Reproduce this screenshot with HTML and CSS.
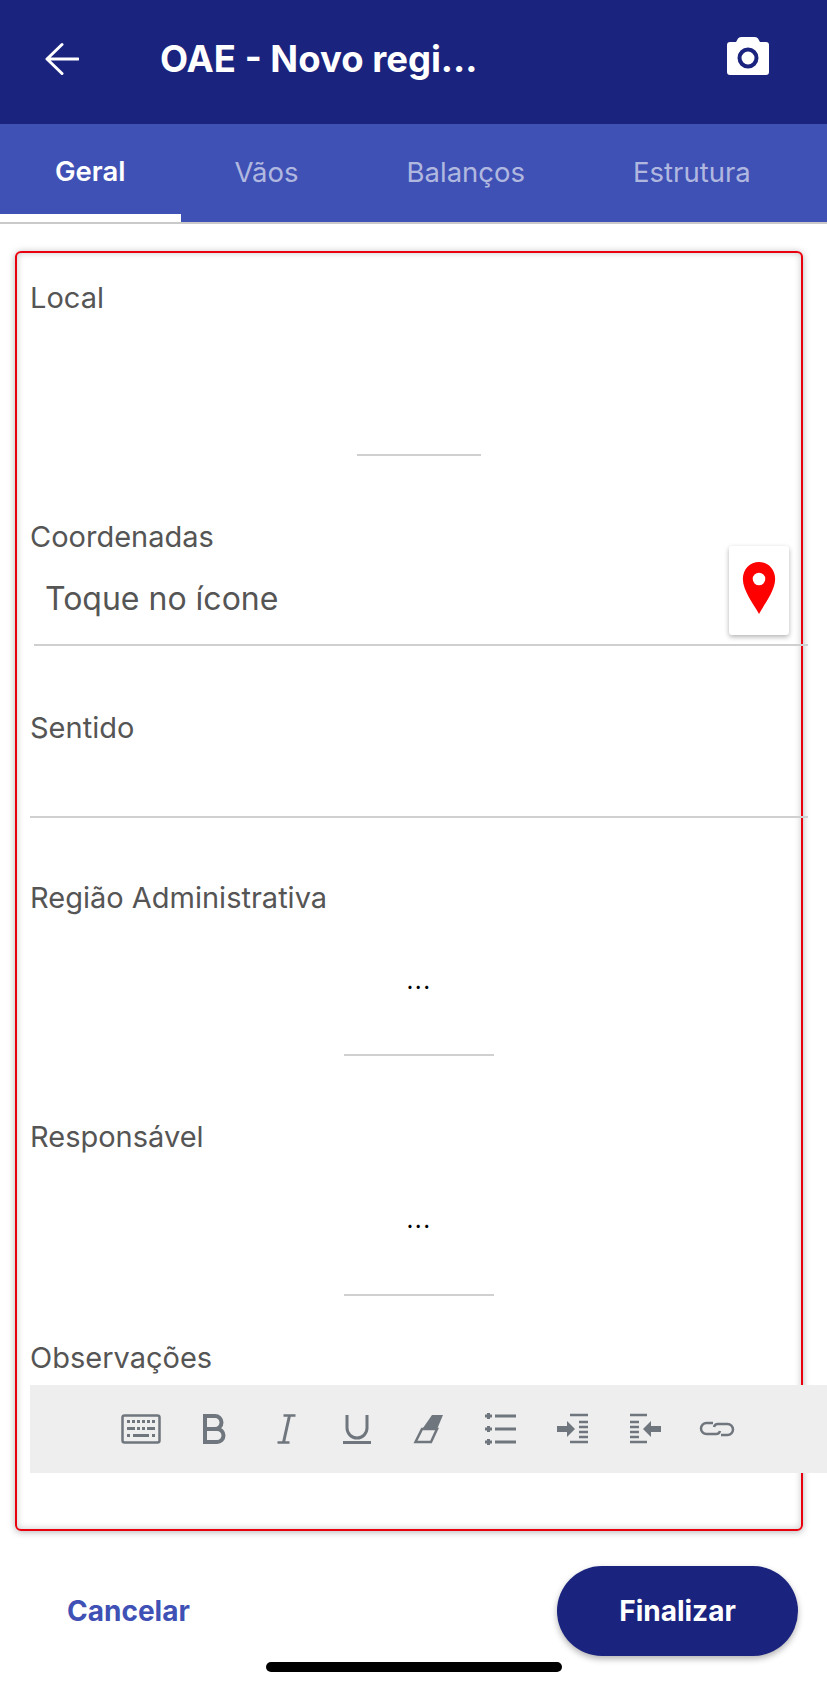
FILE: index.html
```html
<!DOCTYPE html>
<html lang="pt-BR">
<head>
    <meta charset="UTF-8">
    <meta name="viewport" content="width=device-width, initial-scale=1.0">
    <title>OAE - Novo registro</title>
    <link rel="stylesheet" href="styles.css">
</head>
<body>
    <header class="app-bar">
        <svg class="back-icon" viewBox="0 0 34 34">
            <path d="M33 17H2M17 2.500 2 17l15 14.500"/>
        </svg>
        <h1 class="title">OAE - Novo regi...</h1>
        <svg class="camera-icon" viewBox="0 0 42 38">
            <path fill-rule="evenodd" d="M9 5 11 1.500Q12 0 14 0H28Q30 0 31 1.500L33 5H39Q42 5 42 8V35Q42 38 39 38H3Q0 38 0 35V8Q0 5 3 5ZM21 10.500A10.500 10.500 0 1 0 21 31.500 10.500 10.500 0 0 0 21 10.500ZM21 14.500A6.500 6.500 0 1 1 21 27.500 6.500 6.500 0 0 1 21 14.500Z"/>
        </svg>
    </header>

    <nav class="tabs">
        <div class="tab active">Geral</div>
        <div class="tab">Vãos</div>
        <div class="tab">Balanços</div>
        <div class="tab">Estrutura</div>
    </nav>

    <main class="panel">
        <div class="field first">
            <div class="label">Local</div>
            <div class="picker short"></div>
        </div>

        <div class="field coordinates">
            <div class="label">Coordenadas</div>
            <div class="coords">Toque no ícone</div>
            <div class="pin-button">
                <svg class="pin-icon" viewBox="0 0 36 58">
                    <path fill-rule="evenodd" d="M18 0C8 0 0 8 0 19 0 32 12 47 18 58 24 47 36 32 36 19 36 8 28 0 18 0ZM18 12A7 7 0 1 1 18 26 7 7 0 0 1 18 12Z"/>
                </svg>
            </div>
        </div>

        <div class="field">
            <div class="label">Sentido</div>
            <div class="text-input"></div>
        </div>

        <div class="field region">
            <div class="label">Região Administrativa</div>
            <div class="picker">...</div>
        </div>

        <div class="field owner">
            <div class="label">Responsável</div>
            <div class="picker tall">...</div>
        </div>

        <div class="field last">
            <div class="label">Observações</div>
            <div class="toolbar">
                <div class="tool">
                    <svg width="40" height="30" viewBox="0 0 40 30">
                        <rect x="1.500" y="1.500" width="37" height="27" rx="2" class="line"/>
                        <path class="fill" d="M6 6h3v3H6zM11 6h3v3h-3zM16 6h3v3h-3zM21 6h3v3h-3zM26 6h3v3h-3zM31 6h3v3h-3zM6 13h8v3H6zM16 13h3v3h-3zM21 13h3v3h-3zM26 13h8v3h-8zM6 20h3v3H6zM12 20h16v3H12zM31 20h3v3h-3z"/>
                    </svg>
                </div>
                <div class="tool">
                    <svg width="24" height="30" viewBox="0 0 24 30">
                        <path class="line thick" d="M4 2h10a6.500 6.500 0 0 1 0 13H4zM4 15h12a6.500 6.500 0 0 1 0 13H4z"/>
                    </svg>
                </div>
                <div class="tool">
                    <svg width="18" height="30" viewBox="0 0 18 30">
                        <path class="line" d="M7.500 1.500h12M1.500 28.500h12"/>
                        <path class="line medium" d="M13.500 1.500 7.500 28.500"/>
                    </svg>
                </div>
                <div class="tool">
                    <svg width="28" height="30" viewBox="0 0 28 30">
                        <path class="line medium" d="M4 1v13a10 10 0 0 0 20 0V1M0 28.500h28"/>
                    </svg>
                </div>
                <div class="tool">
                    <svg width="30" height="30" viewBox="0 0 30 30">
                        <path class="fill" d="M18 1h11l-5.500 13H9z"/>
                        <path class="line" d="M8 15h15l-6 13H1.500z"/>
                    </svg>
                </div>
                <div class="tool">
                    <svg width="32" height="30" viewBox="0 0 32 30">
                        <path class="line medium" d="M10 2h21M10 15h21M10 28h21M0 2h7M3.500 -1v6M0 15h7M3.500 12v6M0 28h7M3.500 25v6"/>
                    </svg>
                </div>
                <div class="tool">
                    <svg width="32" height="30" viewBox="0 0 32 30">
                        <path class="line" d="M13 1h18M22 8h9M22 13h9M22 18h9M22 23h9M13 28h18"/>
                        <path class="fill" d="M0 12h10V7l8 8-8 8v-5H0z"/>
                    </svg>
                </div>
                <div class="tool">
                    <svg width="32" height="30" viewBox="0 0 32 30">
                        <path class="line" d="M1 1h17M1 8h9M1 13h9M1 18h9M1 23h9M1 28h17"/>
                        <path class="fill" d="M32 12H22V7l-8 8 8 8v-5h10z"/>
                    </svg>
                </div>
                <div class="tool">
                    <svg width="36" height="16" viewBox="0 0 36 16">
                        <path class="line" d="M14 2H7.500a5.500 5.500 0 0 0 0 11H17a4 4 0 0 0 4-3M22 14h6.500a5.500 5.500 0 0 0 0-11H19a4 4 0 0 0-4 3"/>
                    </svg>
                </div>
            </div>
        </div>
    </main>

    <footer class="actions">
        <div class="cancel">Cancelar</div>
        <div class="finish">Finalizar</div>
    </footer>
    <div class="home-bar"></div>
</body>
</html>
```

FILE: styles.css
```css
* {
    box-sizing: border-box;
}

body {
    margin: 0;
    background-color: white;
    font-family: Inter, "Liberation Sans", sans-serif;
    overflow-x: hidden;
}

.app-bar {
    display: flex;
    align-items: center;
    height: 124px;
    padding: 0 58px 6px 45px;
    background-color: #1a237e;
}

.back-icon {
    width: 34px;
    height: 34px;
    fill: none;
    stroke: white;
    stroke-width: 3;
    stroke-linecap: round;
    stroke-linejoin: round;
}

.title {
    flex: 1;
    margin: 0 0 0 81px;
    color: white;
    font-size: 36.500px;
    font-weight: 700;
}

.camera-icon {
    width: 42px;
    height: 38px;
    margin-bottom: 6px;
    fill: white;
}

.tabs {
    display: flex;
    height: 100px;
    background-color: #3f51b5;
    border-bottom: 2px solid #c9c9c9;
}

.tab {
    display: flex;
    align-items: center;
    height: 98px;
    padding: 0 54px 2px;
    color: rgba(255, 255, 255, 0.6);
    font-size: 27.500px;
}

.tab.active {
    padding: 6px 55px 2px;
    border-bottom: 8px solid white;
    color: white;
    font-weight: 600;
}

.panel {
    height: 1280px;
    margin: 27px 24px 0 15px;
    padding-left: 13px;
    border: 2px solid #e8000f;
    border-radius: 6px;
    box-shadow: 0 1px 7px rgba(0, 0, 0, 0.3), inset 0 0 7px rgba(0, 0, 0, 0.22);
}

.field {
    position: relative;
    width: 778px;
    margin-top: 65px;
}

.field.first {
    margin-top: 28px;
}

.field.coordinates {
    margin-top: 64px;
}

.field.region {
    margin-top: 63px;
}

.field.owner {
    margin-top: 64px;
}

.field.last {
    margin-top: 45px;
}

.label {
    height: 34px;
    color: #555555;
    font-size: 29px;
    line-height: 34px;
}

.picker {
    width: 150px;
    height: 141px;
    margin: 0 auto;
    padding-top: 46px;
    border-bottom: 2px solid #d0d0d0;
    color: black;
    font-size: 24px;
    letter-spacing: 1.500px;
    line-height: 40px;
    text-align: center;
}

.picker.short {
    width: 124px;
}

.picker.tall {
    height: 142px;
}

.coords {
    height: 92px;
    margin-left: 4px;
    padding-left: 11px;
    border-bottom: 2px solid #d0d0d0;
    color: #555555;
    font-size: 32px;
    line-height: 90px;
}

.pin-button {
    position: absolute;
    top: 26px;
    right: 19px;
    display: flex;
    align-items: center;
    justify-content: center;
    width: 60px;
    height: 89px;
    padding-bottom: 6px;
    border-radius: 3px;
    background-color: white;
    box-shadow: 0 2px 5px rgba(0, 0, 0, 0.3);
}

.pin-icon {
    width: 36px;
    height: 52px;
    fill: #ff0000;
}

.text-input {
    height: 73px;
    border-bottom: 2px solid #d0d0d0;
}

.toolbar {
    display: flex;
    align-items: center;
    justify-content: center;
    width: 797px;
    height: 88px;
    margin-top: 10px;
    background-color: #eeeeee;
}

.tool {
    display: flex;
    align-items: center;
    justify-content: center;
    width: 72px;
}

.tool svg {
    overflow: visible;
}

.line {
    fill: none;
    stroke: #6f767d;
    stroke-width: 2.500;
}

.line.medium {
    stroke-width: 3;
}

.line.thick {
    stroke-width: 4;
}

.fill {
    fill: #6f767d;
}

.actions {
    display: flex;
    align-items: center;
    justify-content: space-between;
    height: 90px;
    margin-top: 35px;
    padding: 0 29px 0 67px;
}

.cancel {
    color: #3f51b5;
    font-size: 28px;
    font-weight: 700;
}

.finish {
    display: flex;
    align-items: center;
    justify-content: center;
    width: 241px;
    height: 90px;
    border-radius: 45px;
    background-color: #1a237e;
    box-shadow: 0 3px 6px rgba(0, 0, 0, 0.3);
    color: white;
    font-size: 28px;
    font-weight: 700;
}

.home-bar {
    width: 296px;
    height: 10px;
    margin: 6px auto 0;
    border-radius: 5px;
    background-color: black;
}
```
